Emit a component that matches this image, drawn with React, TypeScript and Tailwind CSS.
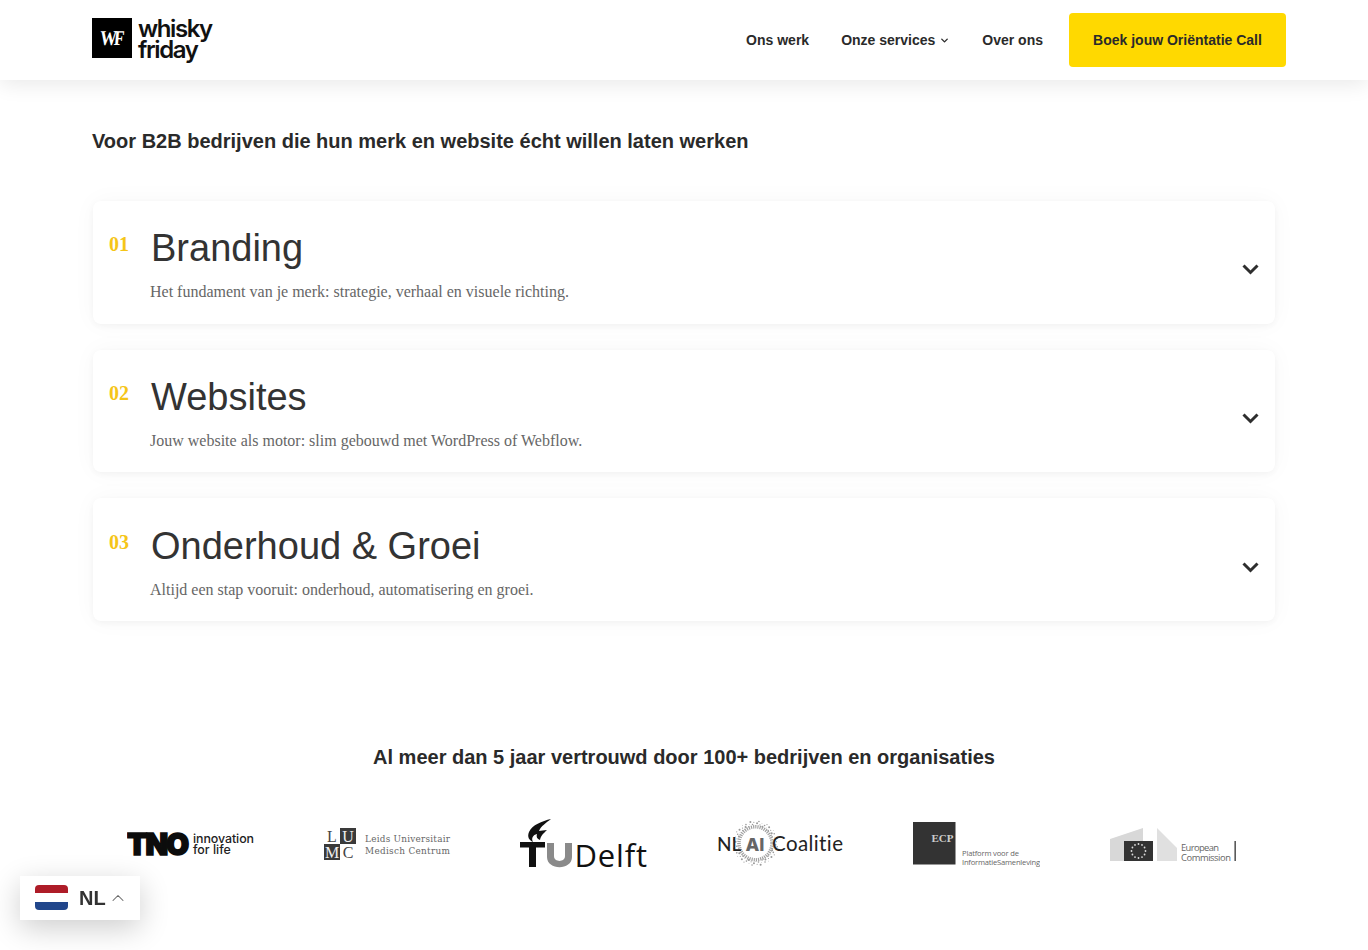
import React from "react";
import { ChevronDown, ChevronUp } from "lucide-react";

const sans = "font-['Liberation_Sans',Arial,sans-serif]";
const serif = "font-['Liberation_Serif','Times_New_Roman',serif]";

const services = [
  { n: "01", t: "Branding", d: "Het fundament van je merk: strategie, verhaal en visuele richting.", pad: "pt-0" },
  { n: "02", t: "Websites", d: "Jouw website als motor: slim gebouwd met WordPress of Webflow.", pad: "pt-0" },
  { n: "03", t: "Onderhoud & Groei", d: "Altijd een stap vooruit: onderhoud, automatisering en groei.", pad: "pt-px" },
];

function Logo() {
  return (
    <div className="flex items-start h-[44px] w-[122px]">
      <div className="w-[40px] h-[40px] bg-black flex items-center justify-center shrink-0">
        <span className="text-white font-['Liberation_Serif',serif] font-bold text-[21px] tracking-[-3.5px] pr-[3px] leading-none -skew-x-6 scale-x-80">WF</span>
      </div>
      <div className="ml-[6px] font-['Inter',sans-serif] font-semibold text-[24px] leading-[21px] tracking-[-1.4px] text-[#111]">
        <div>whisky</div>
        <div>friday</div>
      </div>
    </div>
  );
}

function Tno() {
  return (
    <svg width="127" height="60" viewBox="0 0 127 60">
      <text x="0" y="39.5" fontFamily="Inter, sans-serif" fontWeight="900" fontSize="29.5" letterSpacing="-1.8" fill="#0c0c0c" stroke="#0c0c0c" strokeWidth="1.6">TNO</text>
      <text x="66" y="27.7" fontFamily="Inter, sans-serif" fontWeight="500" fontSize="12.4" fill="#222" textLength="61">innovation</text>
      <text x="66" y="39" fontFamily="Inter, sans-serif" fontWeight="500" fontSize="12.4" fill="#222">for life</text>
    </svg>
  );
}

function Lumc() {
  return (
    <svg width="127" height="60" viewBox="0 0 127 60">
      <rect x="16" y="13" width="16" height="16" fill="#3a3a3a" />
      <rect x="0" y="29" width="16" height="16" fill="#3a3a3a" />
      <g fontFamily="Liberation Serif, serif" fontSize="16" textAnchor="middle">
        <text x="8" y="26.5" fill="#444">L</text>
        <text x="24" y="26.5" fill="#eee">U</text>
        <text x="8" y="42.5" fill="#eee">M</text>
        <text x="24" y="42.5" fill="#444">C</text>
      </g>
      <g fontFamily="DejaVu Serif, serif" fontSize="8.9" fill="#666">
        <text x="41" y="27" textLength="85">Leids Universitair</text>
        <text x="41" y="39" textLength="85">Medisch Centrum</text>
      </g>
    </svg>
  );
}

function TuDelft() {
  return (
    <svg width="127" height="60" viewBox="0 0 127 60">
      <path d="M31 4 C22 6 12 10 9 17 C7 22 9 25 13 27 C11 23 13 20 17 19 C16 22 17 24 20 25 C21 20 24 18 27 15 C24 15 21 16 19 16 C21 11 26 8 31 4Z" fill="#111" />
      <rect x="0" y="27" width="25" height="5.5" fill="#111" />
      <rect x="9" y="27" width="7" height="25" fill="#111" />
      <path d="M27 28 h7 v13 c0 6.5 11 6.5 11 0 v-13 h7 v14 c0 13.5 -25 13.5 -25 0z" fill="#8a8a8a" />
      <text x="54.5" y="52" fontFamily="Open Sans, sans-serif" fontSize="31" fill="#111" textLength="72.5">Delft</text>
    </svg>
  );
}

function NlAi() {
  const dots = Array.from({ length: 80 }, (_, i) => {
    const a = (i / 80) * Math.PI * 2;
    const r = 18 + ((i * 7) % 5);
    return { x: 38.5 + Math.cos(a) * r, y: 28.3 + Math.sin(a) * r, s: 0.4 + ((i * 3) % 4) * 0.2 };
  });
  return (
    <svg width="127" height="60" viewBox="0 0 127 60">
      <g fill="#999">
        {dots.map((d, i) => (
          <circle key={i} cx={d.x} cy={d.y} r={d.s} />
        ))}
      </g>
      <circle cx="38.5" cy="28.3" r="16.5" fill="none" stroke="#a0a0a0" strokeWidth="3.5" strokeDasharray="1.2 1" />
      <text x="0" y="35.7" fontFamily="Lato, sans-serif" fontWeight="500" fontSize="19" fill="#222">NL</text>
      <text x="28.5" y="35.7" fontFamily="Inter, sans-serif" fontWeight="800" fontSize="18" fill="#666">AI</text>
      <text x="55" y="35.7" fontFamily="Lato, sans-serif" fontSize="20.5" fill="#222" textLength="71" style={{ fontVariantLigatures: "none" }}>Coalitie</text>
    </svg>
  );
}

function Ecp() {
  return (
    <svg width="127" height="60" viewBox="0 0 127 60">
      <rect x="0" y="7" width="42.5" height="42.5" fill="#333" />
      <text x="18.5" y="27" fontFamily="Liberation Serif, serif" fontWeight="700" fontSize="11" fill="#ccc">ECP</text>
      <g fontFamily="Open Sans, sans-serif" fontSize="7.6" fill="#666">
        <text x="49" y="40.5" textLength="57">Platform voor de</text>
        <text x="49" y="49.7" textLength="78">InformatieSamenleving</text>
      </g>
    </svg>
  );
}

function Ec() {
  const stars = Array.from({ length: 12 }, (_, i) => {
    const a = (i / 12) * Math.PI * 2;
    return { x: 28.5 + Math.cos(a) * 7, y: 36 + Math.sin(a) * 7 };
  });
  return (
    <svg width="127" height="60" viewBox="0 0 127 60">
      <path d="M0 24 L33 13 V26 H14 V46 H0Z" fill="#d8d8d8" />
      <rect x="14" y="26" width="29" height="20" fill="#333" />
      <g fill="#ddd">
        {stars.map((s, i) => (
          <circle key={i} cx={s.x} cy={s.y} r="0.9" />
        ))}
      </g>
      <path d="M47 13 L67 33 V46 H47Z" fill="#e0e0e0" />
      <g fontFamily="Open Sans, sans-serif" fontSize="9.4" fill="#666">
        <text x="71" y="36" textLength="38">European</text>
        <text x="71" y="46" textLength="50">Commission</text>
      </g>
      <rect x="124.5" y="26" width="1.3" height="20" fill="#333" />
    </svg>
  );
}

export default function App() {
  return (
    <div className={`${sans} min-h-[950px] bg-white text-[#2a2a2a] relative overflow-hidden`}>
      <header className="h-20 bg-white shadow-[0_4px_20px_rgba(0,0,0,0.09)] pl-[92px] relative">
        <div className="w-[1194px] h-full flex items-center justify-between">
          <Logo />
          <nav className="flex items-center text-[14px] font-bold text-[#2a2a2a]">
            <a className="mr-[32px]">Ons werk</a>
            <a className="mr-[32px] flex items-center gap-[4px]">
              Onze services
              <ChevronDown size={11} strokeWidth={3} />
            </a>
            <a className="mr-[26px]">Over ons</a>
            <a className="h-[54px] w-[217px] flex items-center justify-center rounded-[4px] bg-[#ffd900]">Boek jouw Oriëntatie Call</a>
          </nav>
        </div>
      </header>

      <main className="px-[92px]">
        <h2 className="mt-[47px] text-[20px] leading-[28px] font-bold">Voor B2B bedrijven die hun merk en website écht willen laten werken</h2>

        <div className="mt-[46px] ml-px w-[1182px] flex flex-col gap-[26px]">
          {services.map((s) => (
            <div key={s.n} className={`${s.pad} h-[122.5px] rounded-[8px] bg-white shadow-[0_2px_6px_rgba(0,0,0,0.04),0_0_24px_rgba(0,0,0,0.035)] pl-[16px] pr-[16px] flex items-start`}>
              <div className={`${serif} w-[41px] mt-[31px] text-[20px] leading-[24px] font-bold text-[#f5c518]`}>{s.n}</div>
              <div className="mt-[22px] flex-1">
                <div className="pl-px text-[38px] leading-[50px] text-[#333]">{s.t}</div>
                <p className={`${serif} mt-[7px] text-[16px] leading-[24px] text-[#666]`}>{s.d}</p>
              </div>
              <svg width="17" height="11" viewBox="0 0 17 11" className="mt-[63px] text-[#2e2e2e]" fill="none" stroke="currentColor" strokeWidth="3">
                <path d="M1.5 1.5 L8.5 8.5 L15.5 1.5" />
              </svg>
            </div>
          ))}
        </div>

        <h2 className="mt-[122px] text-center text-[20px] leading-[28px] font-bold">Al meer dan 5 jaar vertrouwd door 100+ bedrijven en organisaties</h2>

        <div className="mt-[44px] ml-[35px] flex gap-[69.6px]">
          <Tno />
          <Lumc />
          <TuDelft />
          <NlAi />
          <Ecp />
          <Ec />
        </div>
      </main>

      <div className="fixed left-[20px] top-[876px] w-[120px] h-[44px] bg-white shadow-[0_8px_30px_rgba(0,0,0,0.2)] flex items-center pl-[15px]">
        <div className="w-[33px] h-[25px] mb-px rounded-[4px] overflow-hidden flex flex-col shrink-0">
          <div className="flex-1 bg-[#ae1c28]" />
          <div className="flex-1 bg-white" />
          <div className="flex-1 bg-[#21468b]" />
        </div>
        <span className="ml-[11px] text-[20px] font-bold text-[#333]">NL</span>
        <ChevronUp size={20} strokeWidth={1.25} className="ml-[2px] text-[#666]" />
      </div>
    </div>
  );
}
